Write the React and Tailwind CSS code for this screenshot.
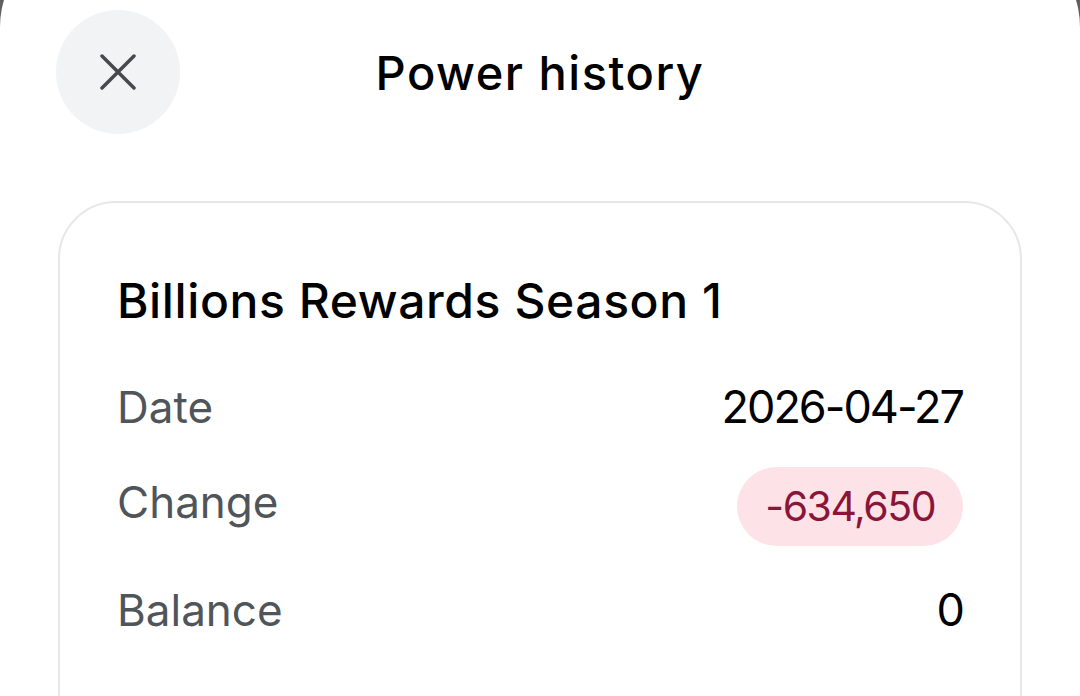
const rows = [
  { label: "Date", value: "2026-04-27" },
  { label: "Change", value: "-634,650", negative: true },
  { label: "Balance", value: "0" },
];

function CloseIcon() {
  return (
    <svg width="36" height="36" viewBox="0 0 36 36" fill="none">
      <path
        d="M2 2L34 34M34 2L2 34"
        stroke="#46494c"
        strokeWidth="3.5"
        strokeLinecap="round"
      />
    </svg>
  );
}

export default function App() {
  return (
    <div className="h-[696px] overflow-hidden bg-[#5f5f5f] font-['Inter','Roboto',sans-serif]">
      <div className="-mt-[66px] h-[800px] rounded-t-[93px] bg-white pt-[76px]">
        {/* Header */}
        <div className="grid grid-cols-[1fr_auto_1fr] items-center">
          <div className="pl-[56px]">
            <button className="flex h-[124px] w-[124px] items-center justify-center rounded-full bg-[#f1f3f5]">
              <CloseIcon />
            </button>
          </div>
          <h1 className="text-[47px] font-medium leading-none tracking-[1.5px] text-black">
            Power history
          </h1>
          <div />
        </div>

        {/* Card */}
        <div className="mx-[58px] mt-[67px] h-[600px] rounded-[58px] border-2 border-[#e6e7e9] px-[57px] pt-[73px]">
          <h2 className="text-[48px] font-medium leading-[49px] tracking-[0.6px] text-black">
            Billions Rewards Season 1
          </h2>
          <div className="mt-[56px] flex flex-col">
            {rows.map((row) => (
              <div
                key={row.label}
                className={
                  row.negative
                    ? "mt-[34px] mb-[38px] flex h-[79px] items-center justify-between"
                    : "flex h-[52px] items-center justify-between"
                }
              >
                <span
                  className={
                    row.negative
                      ? "pb-[10px] text-[44px] text-[#50555a]"
                      : "text-[44px] text-[#50555a]"
                  }
                >
                  {row.label}
                </span>
                {row.negative ? (
                  <span className="flex h-[79px] items-center rounded-full bg-[#fde3e7] px-[28px] text-[41px] tracking-[-1.5px] text-[#8a1538]">
                    {row.value}
                  </span>
                ) : (
                  <span className="text-[45px] tracking-[-2px] text-black">
                    {row.value}
                  </span>
                )}
              </div>
            ))}
          </div>
        </div>
      </div>
    </div>
  );
}
